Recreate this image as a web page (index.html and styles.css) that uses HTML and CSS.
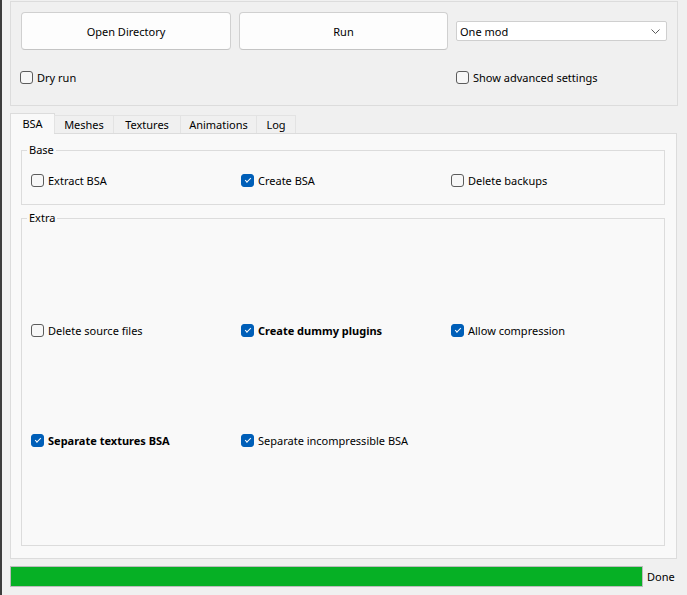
FILE: index.html
```html
<!DOCTYPE html>
<html lang="en">
<head>
    <meta charset="UTF-8">
    <title>BSA Tool</title>
    <link rel="stylesheet" href="styles.css">
</head>
<body>
    <div class="window">
        <div class="top-panel">
            <div class="top-row">
                <button class="push-button">Open Directory</button>
                <button class="push-button">Run</button>
                <div class="combo">
                    <span>One mod</span>
                    <svg width="9" height="5" viewBox="0 0 9 5"><polyline points="0.5,0.5 4.5,4.5 8.5,0.5" fill="none" stroke="#5a5a5a" stroke-width="1"/></svg>
                </div>
            </div>
            <div class="top-row options-row">
                <label class="check dry-run"><span class="box"></span>Dry run</label>
                <span></span>
                <label class="check"><span class="box"></span>Show advanced settings</label>
            </div>
        </div>

        <div class="tabs">
            <div class="tab active" style="width: 45px">BSA</div>
            <div class="tab" style="width: 60px">Meshes</div>
            <div class="tab" style="width: 68px">Textures</div>
            <div class="tab" style="width: 77px">Animations</div>
            <div class="tab" style="width: 40px">Log</div>
        </div>

        <div class="tab-pane">
            <fieldset class="group base-group">
                <legend>Base</legend>
                <div class="check-grid">
                    <label class="check"><span class="box"></span>Extract BSA</label>
                    <label class="check"><span class="box checked"></span>Create BSA</label>
                    <label class="check"><span class="box"></span>Delete backups</label>
                </div>
            </fieldset>

            <fieldset class="group extra-group">
                <legend>Extra</legend>
                <div class="check-grid extra-grid">
                    <label class="check"><span class="box"></span>Delete source files</label>
                    <label class="check bold"><span class="box checked"></span>Create dummy plugins</label>
                    <label class="check"><span class="box checked"></span>Allow compression</label>
                    <label class="check bold"><span class="box checked"></span>Separate textures BSA</label>
                    <label class="check"><span class="box checked"></span>Separate incompressible BSA</label>
                </div>
            </fieldset>
        </div>

        <div class="status-row">
            <div class="progress-bar">
                <div class="progress-fill" style="width: 100%"></div>
            </div>
            <span class="status-text">Done</span>
        </div>
    </div>
</body>
</html>
```

FILE: styles.css
```css
* {
    box-sizing: border-box;
}

body {
    margin: 0;
    background-color: #f0f0f0;
    color: #000000;
    font-family: 'Noto Sans', 'Liberation Sans', sans-serif;
    font-size: 11px;
}

.window {
    width: 687px;
    height: 595px;
    border-left: 2px solid #3c3c3c;
    padding: 1px 10px 0 8px;
    overflow: hidden;
}

.top-panel {
    width: 668px;
    height: 105px;
    border: 1px solid #dcdcdc;
    padding: 10px 10px 0 10px;
}

.top-row {
    display: grid;
    grid-template-columns: 210px 209px 211px;
    column-gap: 8px;
    align-items: center;
}

.push-button {
    height: 38px;
    background: #fdfdfd;
    border: 1px solid #d0d0d0;
    border-bottom-color: #c4c4c4;
    border-radius: 4px;
    font-family: inherit;
    font-size: 11px;
    color: #000000;
    padding: 0;
}

.combo {
    height: 20px;
    background: #ffffff;
    border: 1px solid #cfcfcf;
    border-radius: 2px;
    display: flex;
    align-items: center;
    justify-content: space-between;
    padding: 0 6px 0 3px;
}

.options-row {
    margin-top: 21px;
}

.dry-run {
    margin-left: -1px;
}

.check {
    display: flex;
    align-items: center;
    gap: 4px;
    height: 13px;
    white-space: nowrap;
}

.check.bold {
    font-weight: bold;
}

.box {
    width: 13px;
    height: 13px;
    flex: none;
    border: 1px solid #5c5c5c;
    border-radius: 3px;
    background: #f7f7f7;
    position: relative;
}

.box.checked {
    background: #005fb8;
    border-color: #005fb8;
}

.box.checked::after {
    content: '';
    position: absolute;
    left: 3px;
    top: 3px;
    width: 5px;
    height: 2px;
    border-left: 1px solid #ffffff;
    border-bottom: 1px solid #ffffff;
    transform: rotate(-45deg);
}

.tabs {
    display: flex;
    align-items: flex-end;
    margin-top: 7px;
    height: 20px;
    position: relative;
    z-index: 1;
}

.tab {
    height: 18px;
    border: 1px solid #e3e3e3;
    border-bottom: none;
    margin-right: -1px;
    background: #f0f0f0;
    text-align: center;
    line-height: 18px;
}

.tab.active {
    height: 21px;
    margin-bottom: -1px;
    background: #f9f9f9;
    border-color: #dcdcdc;
    line-height: 20px;
}

.tab-pane {
    width: 667px;
    height: 426px;
    background: #f9f9f9;
    border: 1px solid #dcdcdc;
    padding: 8px 11px 0 10px;
}

.group {
    margin: 0;
    min-width: 0;
    border: 1px solid #dcdcdc;
    padding: 0 9px;
}

.group legend {
    margin-left: -4px;
    padding: 0 2px;
    line-height: 16px;
}

.base-group {
    height: 63px;
    padding-top: 16px;
}

.extra-group {
    height: 336px;
    margin-top: 5px;
    padding-top: 98px;
}

.check-grid {
    display: grid;
    grid-template-columns: 210px 210px 210px;
}

.extra-grid {
    row-gap: 97px;
}

.status-row {
    display: flex;
    align-items: center;
    gap: 4px;
    margin-top: 7px;
}

.progress-bar {
    width: 633px;
    height: 21px;
    border: 1px solid #bcbcbc;
    background: #e6e6e6;
}

.progress-fill {
    height: 100%;
    background: #06b025;
}
```
